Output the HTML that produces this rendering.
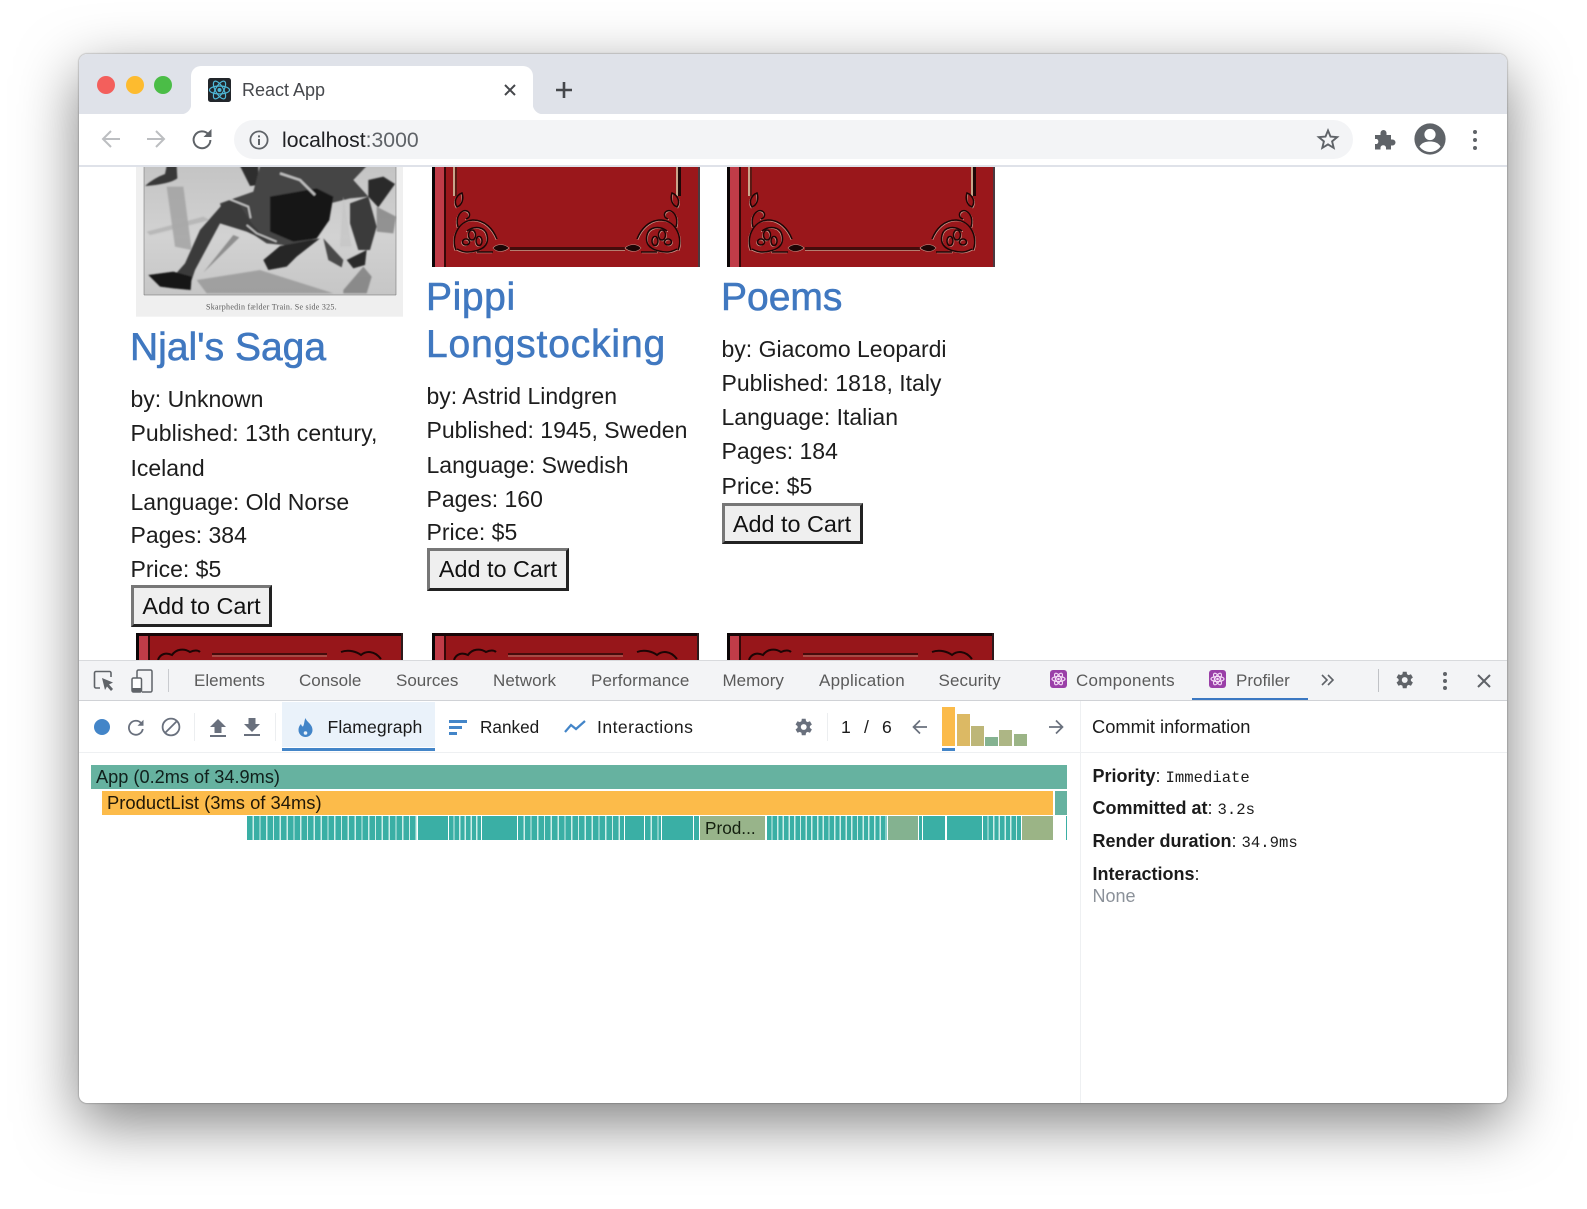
<!DOCTYPE html>
<html><head><meta charset="utf-8"><title>React App</title>
<style>
html,body{margin:0;padding:0;background:#fff}
body{position:relative;width:1587px;height:1209px;overflow:hidden;font-family:"Liberation Sans",sans-serif;color:#111}
.a{position:absolute}
.t{position:absolute;white-space:nowrap;line-height:1}
#win{position:absolute;left:79px;top:54px;width:1428px;height:1049px;border-radius:8px;box-shadow:0 20px 60px rgba(0,0,0,.5),0 0 1px 1px rgba(0,0,0,.16);background:#fff;overflow:hidden}
.h{position:absolute;white-space:nowrap;font-size:39px;line-height:1;color:#4078c0;-webkit-text-stroke:.6px #4078c0}
.b{position:absolute;white-space:nowrap;font-size:23px;line-height:1;color:#1d1d1d}
.btn{position:absolute;box-sizing:border-box;height:42px;width:141px;border:3px solid;border-color:#777 #222 #222 #777;background:#efefef;font-size:23.4px;line-height:36px;text-align:center;color:#111}
.dt{position:absolute;white-space:nowrap;font-size:17px;line-height:1;color:#5a5a5a}
.pr{position:absolute;white-space:nowrap;font-size:17.6px;line-height:1;color:#1b1b1b}
.lb{position:absolute;white-space:nowrap;font-size:18px;line-height:1;font-weight:bold;color:#1b1b1b}
.lb span{font-weight:normal}
.lb i{font:normal 15.6px "Liberation Mono",monospace}
.s{position:absolute;top:816px;height:24px;background:repeating-linear-gradient(90deg,#3aafa5 0 5.5px,#cdeee9 5.5px 6.8px)}
.s2{background:repeating-linear-gradient(90deg,#3aafa5 0 4.3px,#cdeee9 4.3px 5.7px)}
.f{position:absolute;top:816px;height:24px;background:#3aafa5}
svg{position:absolute;overflow:visible}
</style></head><body>
<svg width="0" height="0" style="left:0;top:0"><defs>
<filter id="soft"><feGaussianBlur stdDeviation="2.2"/></filter>
<g id="cshape">
<path d="M3,-3C-2,-14 4,-32 20,-33C32,-33 40,-24 44,-14"/>
<path d="M4,-4C10,-1 14,0 22,-2C32,-4 36,-10 34,-18C32,-26 22,-28 14,-22"/>
<ellipse cx="19" cy="-18" rx="3.5" ry="5"/><ellipse cx="26" cy="-12" rx="3" ry="4.5"/><ellipse cx="13" cy="-11" rx="3.5" ry="3"/>
<path d="M5,-26C2,-36 8,-44 14,-42C18,-40 17,-35 13,-34"/>
<path d="M4,-46C0,-52 4,-58 9,-60C11,-54 9,-48 4,-46Z"/>
<path d="M24,-1H40"/>
</g>
<g id="corner" fill="none">
<use href="#cshape" stroke="#c9958a" stroke-width="1" transform="translate(-.8,.8)"/>
<use href="#cshape" stroke="#1c0505" stroke-width="1.5"/>
<path d="M40,-5C44,-10 52,-9 56,-5C52,-1 44,0 40,-5Z" fill="#1c0505" stroke="#c9958a" stroke-width=".6"/>
</g>
<g id="book">
<rect width="268" height="101" fill="#97161a"/>
<rect width="3" height="101" fill="#0a0506"/>
<rect x="3" width="9" height="101" fill="#c03c48"/>
<rect x="12" width="2" height="101" fill="#350808"/>
<rect x="14" width="254" height="101" fill="#9a171b"/>
<rect x="266" width="2" height="101" fill="#4a3a40"/>
<rect x="21" width="2" height="30" fill="#c9a58a"/><rect x="23" width="2" height="30" fill="#5a1a14"/>
<rect x="244" width="2" height="30" fill="#c9a58a"/><rect x="246" width="3" height="30" fill="#1d0707"/>
<rect x="78" y="81" width="115" height="3" fill="#450c0c"/><rect x="78" y="84" width="115" height="1" fill="#b47e70"/>
<use href="#corner" transform="translate(21,87)"/>
<use href="#corner" transform="translate(249,87) scale(-1,1)"/>
</g>
<g id="booktop">
<rect width="267" height="27" fill="#97161a"/>
<rect width="267" height="3" fill="#180608"/>
<rect width="3" height="27" fill="#0a0506"/><rect x="3" y="3" width="9" height="24" fill="#c03c48"/><rect x="12" y="3" width="2" height="24" fill="#350808"/>
<rect x="265" width="2" height="27" fill="#2d1a1c"/>
<path d="M22,27c2,-6 8,-8 14,-5 4,-6 12,-7 18,-3 4,-2 8,-2 10,0M205,19c8,-3 16,0 20,3 5,-4 13,-5 20,4" fill="none" stroke="#1c0505" stroke-width="2"/>
<path d="M76,21h115" stroke="#450c0c" stroke-width="2"/>
<path d="M76,23h115" stroke="#b47e70" stroke-width="1"/>
</g>
<g id="atom" fill="none" stroke="#f4dcf6" stroke-width="1.1"><ellipse cx="8.5" cy="9" rx="6.5" ry="2.6"/><ellipse cx="8.5" cy="9" rx="6.5" ry="2.6" transform="rotate(60 8.5 9)"/><ellipse cx="8.5" cy="9" rx="6.5" ry="2.6" transform="rotate(120 8.5 9)"/><circle cx="8.5" cy="9" r="1.3" fill="#f4dcf6" stroke="none"/></g>
<linearGradient id="ice" x1="0" y1="0" x2="0" y2="1"><stop offset="0" stop-color="#c4c4c4"/><stop offset=".55" stop-color="#d2d2d2"/><stop offset="1" stop-color="#c6c6c6"/></linearGradient>
</defs></svg>

<div id="win"></div>

<!-- tab strip -->
<div class="a" style="left:79px;top:54px;width:1428px;height:60px;background:#dfe2e9;border-radius:8px 8px 0 0"></div>
<div class="a" style="left:191px;top:66px;width:342px;height:48px;background:#fff;border-radius:10px 10px 0 0"></div>
<div class="a" style="left:181px;top:104px;width:10px;height:10px;background:radial-gradient(circle at 0 0,#dfe2e9 10px,#fff 10.5px)"></div>
<div class="a" style="left:533px;top:104px;width:10px;height:10px;background:radial-gradient(circle at 100% 0,#dfe2e9 10px,#fff 10.5px)"></div>
<div class="a" style="left:97px;top:76px;width:18px;height:18px;border-radius:50%;background:#f35f5c"></div>
<div class="a" style="left:126px;top:76px;width:18px;height:18px;border-radius:50%;background:#fdbb2f"></div>
<div class="a" style="left:154px;top:76px;width:18px;height:18px;border-radius:50%;background:#4bbd47"></div>
<svg style="left:208px;top:78px" width="23" height="24" viewBox="0 0 23 24"><rect width="23" height="24" rx="2.5" fill="#22262b"/><g fill="none" stroke="#4fb9d8" stroke-width="1.2"><ellipse cx="11.5" cy="12" rx="10" ry="4"/><ellipse cx="11.5" cy="12" rx="10" ry="4" transform="rotate(60 11.5 12)"/><ellipse cx="11.5" cy="12" rx="10" ry="4" transform="rotate(120 11.5 12)"/></g><circle cx="11.5" cy="12" r="2" fill="#4fb9d8"/></svg>
<div class="t" style="left:242px;top:81px;font-size:18px;color:#46484c">React App</div>
<svg style="left:503px;top:83px" width="14" height="14" viewBox="0 0 14 14"><path d="M2,2L12,12M12,2L2,12" stroke="#45474b" stroke-width="2"/></svg>
<svg style="left:555px;top:81px" width="18" height="18" viewBox="0 0 18 18"><path d="M9,1V17M1,9H17" stroke="#45474b" stroke-width="2.6"/></svg>

<!-- toolbar -->
<div class="a" style="left:234px;top:120px;width:1119px;height:39px;border-radius:20px;background:#f3f4f6"></div>
<svg style="left:101px;top:129px" width="20" height="20" viewBox="0 0 20 20"><path d="M19,10H2M10,2L2,10L10,18" fill="none" stroke="#bcbec1" stroke-width="2"/></svg>
<svg style="left:146px;top:129px" width="20" height="20" viewBox="0 0 20 20"><path d="M1,10H18M10,2L18,10L10,18" fill="none" stroke="#bcbec1" stroke-width="2"/></svg>
<svg style="left:192px;top:129px" width="20" height="20" viewBox="0 0 20 20"><path d="M16.5,5.5A8.4,8.4 0 1 0 18.4,11" fill="none" stroke="#5f6368" stroke-width="2"/><path d="M11.5,8H19.5V0Z" fill="#5f6368"/></svg>
<svg style="left:249px;top:130px" width="20" height="20" viewBox="0 0 20 20"><circle cx="10" cy="10" r="8.6" fill="none" stroke="#5f6368" stroke-width="1.8"/><rect x="9" y="9" width="2" height="6" fill="#5f6368"/><rect x="9" y="5.4" width="2" height="2" fill="#5f6368"/></svg>
<div class="t" style="left:282px;top:130px;font-size:21.2px;color:#202124">localhost<span style="color:#5f6368">:3000</span></div>
<svg style="left:1317px;top:128px" width="22" height="22" viewBox="0 0 22 22"><path d="M11,2.5L13.5,8.6L20.2,9.1L15.1,13.4L16.7,19.9L11,16.4L5.3,19.9L6.9,13.4L1.8,9.1L8.5,8.6Z" fill="none" stroke="#5f6368" stroke-width="1.9"/></svg>
<svg style="left:1374px;top:128px" width="22" height="22" viewBox="0 0 22 22"><path d="M1,7H6.5V5A3,3 0 0 1 12.5,5V7H17V11.5H18.5A3,3 0 0 1 18.5,17.5H17V21.5H12V19.5A2.8,2.8 0 0 0 6.5,19.5V21.5H1V16H3A3,3 0 0 0 3,11H1Z" fill="#5f6368"/></svg>
<svg style="left:1414px;top:123px" width="32" height="32" viewBox="0 0 32 32"><circle cx="16" cy="16" r="15.6" fill="#5f6368"/><circle cx="16" cy="11.5" r="5.6" fill="#fff"/><path d="M5.5,23.5C8,19.5 12,18.5 16,18.5S24,19.5 26.5,23.5C24,27 20,29 16,29S8,27 5.5,23.5Z" fill="#fff"/></svg>
<div class="a" style="left:1473px;top:130px;width:4px;height:4px;border-radius:50%;background:#5f6368;box-shadow:0 8px 0 #5f6368,0 16px 0 #5f6368"></div>

<!-- page -->
<div class="a" style="left:79px;top:166px;width:1428px;height:494px;overflow:hidden;background:#fff">
<svg style="left:41px;top:-6px" width="300" height="170" viewBox="0 0 900 510">
<rect x="48" y="18" width="801" height="452" fill="#efefef"/>
<rect x="72" y="18" width="756" height="387" fill="url(#ice)"/>
<g filter="url(#soft)">
<path d="M140,80L190,80L215,270L165,260Z" fill="#9a9a9a" opacity=".7"/>
<path d="M80,215L250,170L270,180L90,225Z" fill="#a8a8a8" opacity=".6"/>
<path d="M230,360L420,330L640,400H260Z" fill="#8e8e8e" opacity=".7"/>
<path d="M670,390L730,320L755,350L740,400H670Z" fill="#7a7a7a" opacity=".8"/>
<path d="M770,140L828,170L820,220L770,215Z" fill="#828282" opacity=".8"/>
<path d="M140,18H170L172,55Q150,72 75,78Q100,55 135,42Z" fill="#383838"/>
<path d="M360,18H415V75L390,78Z" fill="#2e2e2e"/>
<path d="M420,18H740L700,60L745,110L690,115L630,130L628,180L590,235L520,258L440,250L380,210L340,180L310,170L300,130L400,95Z" fill="#444"/>
<path d="M450,110L590,85L640,110L628,180L590,235L520,245L450,215Z" fill="#161616"/>
<path d="M745,60L790,50L825,72L775,142L745,110Z" fill="#2a2a2a"/>
<path d="M310,130L345,115L395,190L445,245L380,215L300,190L225,330L215,360L160,350L195,310L240,210Z" fill="#3a3a3a"/>
<path d="M330,118L385,140L392,175M380,195L410,220L470,245" fill="none" stroke="#c4c4c4" stroke-width="5"/>
<path d="M480,40L540,60L585,105" fill="none" stroke="#c0c0c0" stroke-width="7"/>
<path d="M85,345L160,335L215,350L212,390L160,385L120,380Z" fill="#151515"/>
<path d="M690,130L745,110L770,200L750,270L715,270L690,190Z" fill="#3a3a3a"/>
<path d="M680,300L740,270L735,315L700,325Z" fill="#2c2c2c"/>
<path d="M430,300L480,258L600,235L530,290L500,320L445,330Z" fill="#282828"/>
<path d="M610,235L670,300L665,322L625,300Z" fill="#4a4a4a"/>
<path d="M250,338L340,225L358,232Z" fill="#8e8e8e"/>
<path d="M670,110L695,260H660Z" fill="#c4c4c4" opacity=".7"/>
</g>
<path d="M72,18V405H828V18" fill="none" stroke="#666" stroke-width="1.5"/>
<text x="258" y="448" font-family="Liberation Serif,serif" font-size="24" fill="#5a5a5a" textLength="392">Skarphedin fælder Train.  Se side 325.</text>
</svg>
<svg style="left:353px;top:0" width="268" height="101"><use href="#book"/></svg>
<svg style="left:648px;top:0" width="267" height="101"><use href="#book"/></svg>
<svg style="left:57px;top:467px" width="267" height="27"><use href="#booktop"/></svg>
<svg style="left:353px;top:467px" width="267" height="27"><use href="#booktop"/></svg>
<svg style="left:648px;top:467px" width="267" height="27"><use href="#booktop"/></svg>
</div>
<div class="a" style="left:79px;top:165px;width:1428px;height:2px;background:#dfe2e9"></div>

<div class="h" style="left:130px;top:328px">Njal's Saga</div>
<div class="b" style="left:130.5px;top:388px">by: Unknown</div>
<div class="b" style="left:130.5px;top:422px;letter-spacing:.08px">Published: 13th century,</div>
<div class="b" style="left:130.5px;top:457px">Iceland</div>
<div class="b" style="left:130.5px;top:491px">Language: Old Norse</div>
<div class="b" style="left:130.5px;top:524px">Pages: 384</div>
<div class="b" style="left:130.5px;top:558px">Price: $5</div>
<div class="btn" style="left:131px;top:585px">Add to Cart</div>

<div class="h" style="left:426px;top:278px;letter-spacing:.6px">Pippi</div>
<div class="h" style="left:426px;top:325px;letter-spacing:.85px">Longstocking</div>
<div class="b" style="left:426.5px;top:385px">by: Astrid Lindgren</div>
<div class="b" style="left:426.5px;top:419px">Published: 1945, Sweden</div>
<div class="b" style="left:426.5px;top:454px">Language: Swedish</div>
<div class="b" style="left:426.5px;top:488px">Pages: 160</div>
<div class="b" style="left:426.5px;top:521px">Price: $5</div>
<div class="btn" style="left:427px;top:548px;width:142px;height:43px;line-height:37px">Add to Cart</div>

<div class="h" style="left:721px;top:278px">Poems</div>
<div class="b" style="left:721.5px;top:338px">by: Giacomo Leopardi</div>
<div class="b" style="left:721.5px;top:372px">Published: 1818, Italy</div>
<div class="b" style="left:721.5px;top:406px">Language: Italian</div>
<div class="b" style="left:721.5px;top:440px">Pages: 184</div>
<div class="b" style="left:721.5px;top:475px">Price: $5</div>
<div class="btn" style="left:721.5px;top:503px;height:41px;line-height:36px">Add to Cart</div>

<!-- devtools tab bar -->
<div class="a" style="left:79px;top:660px;width:1428px;height:39px;background:#f3f4f6;border-top:1px solid #d8dadd;border-bottom:1px solid #d0d2d6;box-sizing:content-box"></div>
<svg style="left:93px;top:670px" width="22" height="22" viewBox="0 0 22 22"><path d="M7,18H3A1.5,1.5 0 0 1 1.5,16.5V3A1.5,1.5 0 0 1 3,1.5H16.5A1.5,1.5 0 0 1 18,3V7" fill="none" stroke="#5f6368" stroke-width="1.6"/><path d="M9,8L20,12.5L16,14.5L20,19L18,21L14,16.5L12,20Z" fill="#5f6368"/></svg>
<svg style="left:131px;top:669px" width="22" height="24" viewBox="0 0 22 24"><path d="M6,9V2.5A1.5,1.5 0 0 1 7.5,1H19.5A1.5,1.5 0 0 1 21,2.5V21.5A1.5,1.5 0 0 1 19.5,23H11" fill="none" stroke="#5f6368" stroke-width="1.5"/><rect x="1" y="9" width="9.5" height="14" rx="1.5" fill="#fff" stroke="#5f6368" stroke-width="1.5"/><rect x="1" y="19" width="9.5" height="4" fill="#5f6368"/></svg>
<div class="a" style="left:168px;top:669px;width:1px;height:23px;background:#c9cbcf"></div>
<div class="dt" style="left:194px;top:672px">Elements</div>
<div class="dt" style="left:299px;top:672px">Console</div>
<div class="dt" style="left:396px;top:672px">Sources</div>
<div class="dt" style="left:493px;top:672px;letter-spacing:.1px">Network</div>
<div class="dt" style="left:591px;top:672px;letter-spacing:.1px">Performance</div>
<div class="dt" style="left:722.5px;top:672px">Memory</div>
<div class="dt" style="left:819px;top:672px;letter-spacing:.25px">Application</div>
<div class="dt" style="left:938.5px;top:672px;letter-spacing:.1px">Security</div>
<svg style="left:1050px;top:670px" width="17" height="18"><rect width="17" height="18" rx="3" fill="#9a3fa8"/><use href="#atom"/></svg>
<div class="dt" style="left:1076px;top:672px;letter-spacing:.25px">Components</div>
<svg style="left:1209px;top:670px" width="17" height="18"><rect width="17" height="18" rx="3" fill="#9a3fa8"/><use href="#atom"/></svg>
<div class="dt" style="left:1236px;top:672px">Profiler</div>
<div class="a" style="left:1192px;top:698px;width:116px;height:2px;background:#3b78c2"></div>
<svg style="left:1321px;top:674px" width="13" height="12" viewBox="0 0 13 12"><path d="M1,1L6,6L1,11M7,1L12,6L7,11" fill="none" stroke="#5f6368" stroke-width="1.6"/></svg>
<div class="a" style="left:1378px;top:669px;width:1px;height:23px;background:#c0c2c6"></div>
<svg style="left:1394px;top:669px" width="22" height="22" viewBox="0 0 24 24"><path d="M19.4,13A7.6,7.6 0 0 0 19.4,11L21.6,9.3 19.5,5.7 16.9,6.7A7.6,7.6 0 0 0 15.2,5.7L14.8,3H10.6L10.2,5.7A7.6,7.6 0 0 0 8.5,6.7L5.9,5.7 3.8,9.3 6,11A7.6,7.6 0 0 0 6,13L3.8,14.7 5.9,18.3 8.5,17.3A7.6,7.6 0 0 0 10.2,18.3L10.6,21H14.8L15.2,18.3A7.6,7.6 0 0 0 16.9,17.3L19.5,18.3 21.6,14.7ZM12.7,15.2A3.2,3.2 0 1 1 12.7,8.8 3.2,3.2 0 0 1 12.7,15.2Z" fill="#5f6368" transform="translate(-1,0)"/></svg>
<div class="a" style="left:1443px;top:672px;width:4px;height:4px;border-radius:50%;background:#5f6368;box-shadow:0 7px 0 #5f6368,0 14px 0 #5f6368"></div>
<svg style="left:1477px;top:674px" width="14" height="14" viewBox="0 0 14 14"><path d="M1,1L13,13M13,1L1,13" stroke="#5f6368" stroke-width="2"/></svg>

<!-- profiler toolbar -->
<div class="a" style="left:94px;top:719px;width:16px;height:16px;border-radius:50%;background:#4385c8"></div>
<svg style="left:127px;top:719px" width="18" height="18" viewBox="0 0 18 18"><path d="M14.3,4.3A7,7 0 1 0 15.8,10" fill="none" stroke="#69707d" stroke-width="1.8"/><path d="M10.5,6.8H16.5V0.8Z" fill="#69707d"/></svg>
<svg style="left:161px;top:717px" width="20" height="20" viewBox="0 0 20 20"><circle cx="10" cy="10" r="8.4" fill="none" stroke="#69707d" stroke-width="1.8"/><path d="M4,16L16,4" stroke="#69707d" stroke-width="1.8"/></svg>
<div class="a" style="left:194px;top:713px;width:1px;height:28px;background:#eceef0"></div>
<svg style="left:209px;top:718px" width="18" height="20" viewBox="0 0 18 20"><path d="M9,1L17,9H12.5V15H5.5V9H1Z" fill="#69707d"/><rect x="1" y="17" width="16" height="2" fill="#69707d"/></svg>
<svg style="left:243px;top:717px" width="18" height="20" viewBox="0 0 18 20"><path d="M5.5,1H12.5V7H17L9,15L1,7H5.5Z" fill="#69707d"/><rect x="1" y="17" width="16" height="2" fill="#69707d"/></svg>
<div class="a" style="left:275px;top:713px;width:1px;height:28px;background:#eceef0"></div>
<div class="a" style="left:282px;top:702px;width:153px;height:45px;background:#eaf2fa"></div>
<div class="a" style="left:282px;top:748px;width:153px;height:3px;background:#4385c8"></div>
<svg style="left:298px;top:718px" width="15" height="19" viewBox="0 0 15 19"><path d="M7.5,0C8.5,4 14.5,6 14.5,12A7,7 0 0 1 .5,12C.5,9 2,7 3,6C3.5,8 4.5,8.5 5,8.5C6.5,6 6,3 7.5,0Z" fill="#4385c8"/><circle cx="7.5" cy="15" r="1.8" fill="#eaf2fa"/></svg>
<div class="pr" style="left:327.5px;top:719px;letter-spacing:.1px">Flamegraph</div>
<svg style="left:449px;top:720px" width="18" height="15"><rect width="18" height="3" fill="#4385c8"/><rect y="6" width="13" height="3" fill="#4385c8"/><rect y="12" width="8" height="3" fill="#4385c8"/></svg>
<div class="pr" style="left:480px;top:719px;font-size:17.2px">Ranked</div>
<svg style="left:564px;top:720px" width="22" height="14" viewBox="0 0 22 14"><path d="M1,12L7,5L12,9L21,1" fill="none" stroke="#4385c8" stroke-width="2.2"/></svg>
<div class="pr" style="left:597px;top:719px;letter-spacing:.45px">Interactions</div>
<svg style="left:793px;top:716px" width="22" height="22" viewBox="0 0 24 24"><path d="M19.4,13A7.6,7.6 0 0 0 19.4,11L21.6,9.3 19.5,5.7 16.9,6.7A7.6,7.6 0 0 0 15.2,5.7L14.8,3H10.6L10.2,5.7A7.6,7.6 0 0 0 8.5,6.7L5.9,5.7 3.8,9.3 6,11A7.6,7.6 0 0 0 6,13L3.8,14.7 5.9,18.3 8.5,17.3A7.6,7.6 0 0 0 10.2,18.3L10.6,21H14.8L15.2,18.3A7.6,7.6 0 0 0 16.9,17.3L19.5,18.3 21.6,14.7ZM12.7,15.2A3.2,3.2 0 1 1 12.7,8.8 3.2,3.2 0 0 1 12.7,15.2Z" fill="#69707d" transform="translate(-1,0)"/></svg>
<div class="a" style="left:827px;top:713px;width:1px;height:28px;background:#eceef0"></div>
<div class="pr" style="left:841px;top:719px">1</div>
<div class="pr" style="left:864px;top:719px">/</div>
<div class="pr" style="left:882px;top:719px">6</div>
<svg style="left:912px;top:719px" width="16" height="16" viewBox="0 0 16 16"><path d="M15,8H2M8,1.5L1.5,8L8,14.5" fill="none" stroke="#69707d" stroke-width="1.7"/></svg>
<div class="a" style="left:942px;top:707px;width:13px;height:39px;background:#fbbb4a"></div>
<div class="a" style="left:957px;top:714px;width:13px;height:32px;background:#dcb964"></div>
<div class="a" style="left:971px;top:726px;width:13px;height:20px;background:#bdb678"></div>
<div class="a" style="left:985px;top:737px;width:13px;height:9px;background:#84b290"></div>
<div class="a" style="left:999px;top:730px;width:13px;height:16px;background:#adb685"></div>
<div class="a" style="left:1014px;top:734px;width:13px;height:12px;background:#9bb486"></div>
<div class="a" style="left:942px;top:748px;width:13px;height:3px;background:#4385c8"></div>
<svg style="left:1048px;top:719px" width="16" height="16" viewBox="0 0 16 16"><path d="M1,8H14M8,1.5L14.5,8L8,14.5" fill="none" stroke="#69707d" stroke-width="1.7"/></svg>

<!-- pane lines -->
<div class="a" style="left:79px;top:752px;width:1428px;height:1px;background:#eef0f2"></div>
<div class="a" style="left:1080px;top:701px;width:1px;height:402px;background:#eef0f2"></div>

<!-- flamegraph -->
<div class="a" style="left:91px;top:765px;width:976px;height:24px;background:#66b2a0"></div>
<div class="t" style="left:96px;top:768px;font-size:18.2px;color:#10201c">App (0.2ms of 34.9ms)</div>
<div class="a" style="left:102px;top:791px;width:951px;height:24px;background:#fcbb4a"></div>
<div class="t" style="left:107px;top:794px;font-size:18.4px;color:#201808">ProductList (3ms of 34ms)</div>
<div class="a" style="left:1055px;top:791px;width:12px;height:24px;background:#66b2a0"></div>
<div class="s" style="left:247px;width:170px"></div>
<div class="f" style="left:418px;width:30px"></div>
<div class="s s2" style="left:449px;width:32px"></div>
<div class="f" style="left:482px;width:35px"></div>
<div class="s" style="left:518px;width:106px"></div>
<div class="f" style="left:625px;width:19px"></div>
<div class="s" style="left:645px;width:16px"></div>
<div class="f" style="left:662px;width:31px"></div>
<div class="s" style="left:694px;width:5px"></div>
<div class="a" style="left:700px;top:816px;width:65px;height:24px;background:#98b48a"></div>
<div class="t" style="left:705px;top:820px;font-size:17.2px;color:#14200f">Prod...</div>
<div class="s s2" style="left:767px;width:120px"></div>
<div class="a" style="left:888px;top:816px;width:30px;height:24px;background:#84b290"></div>
<div class="s" style="left:919px;width:3px"></div>
<div class="f" style="left:923px;width:22px"></div>
<div class="f" style="left:947px;width:35px"></div>
<div class="s s2" style="left:983px;width:38px"></div>
<div class="a" style="left:1022px;top:816px;width:31px;height:24px;background:#9bb486"></div>
<div class="f" style="left:1066px;width:1px"></div>

<!-- right pane -->
<div class="pr" style="left:1092px;top:718px;font-size:18.3px">Commit information</div>
<div class="lb" style="left:1092.5px;top:766.5px">Priority<span>: </span><i>Immediate</i></div>
<div class="lb" style="left:1092.5px;top:799px">Committed at<span>: </span><i>3.2s</i></div>
<div class="lb" style="left:1092.5px;top:832px">Render duration<span>: </span><i>34.9ms</i></div>
<div class="lb" style="left:1092.5px;top:865px">Interactions<span>:</span></div>
<div class="t" style="left:1092.5px;top:887px;font-size:18px;color:#8b9199">None</div>
</body></html>
